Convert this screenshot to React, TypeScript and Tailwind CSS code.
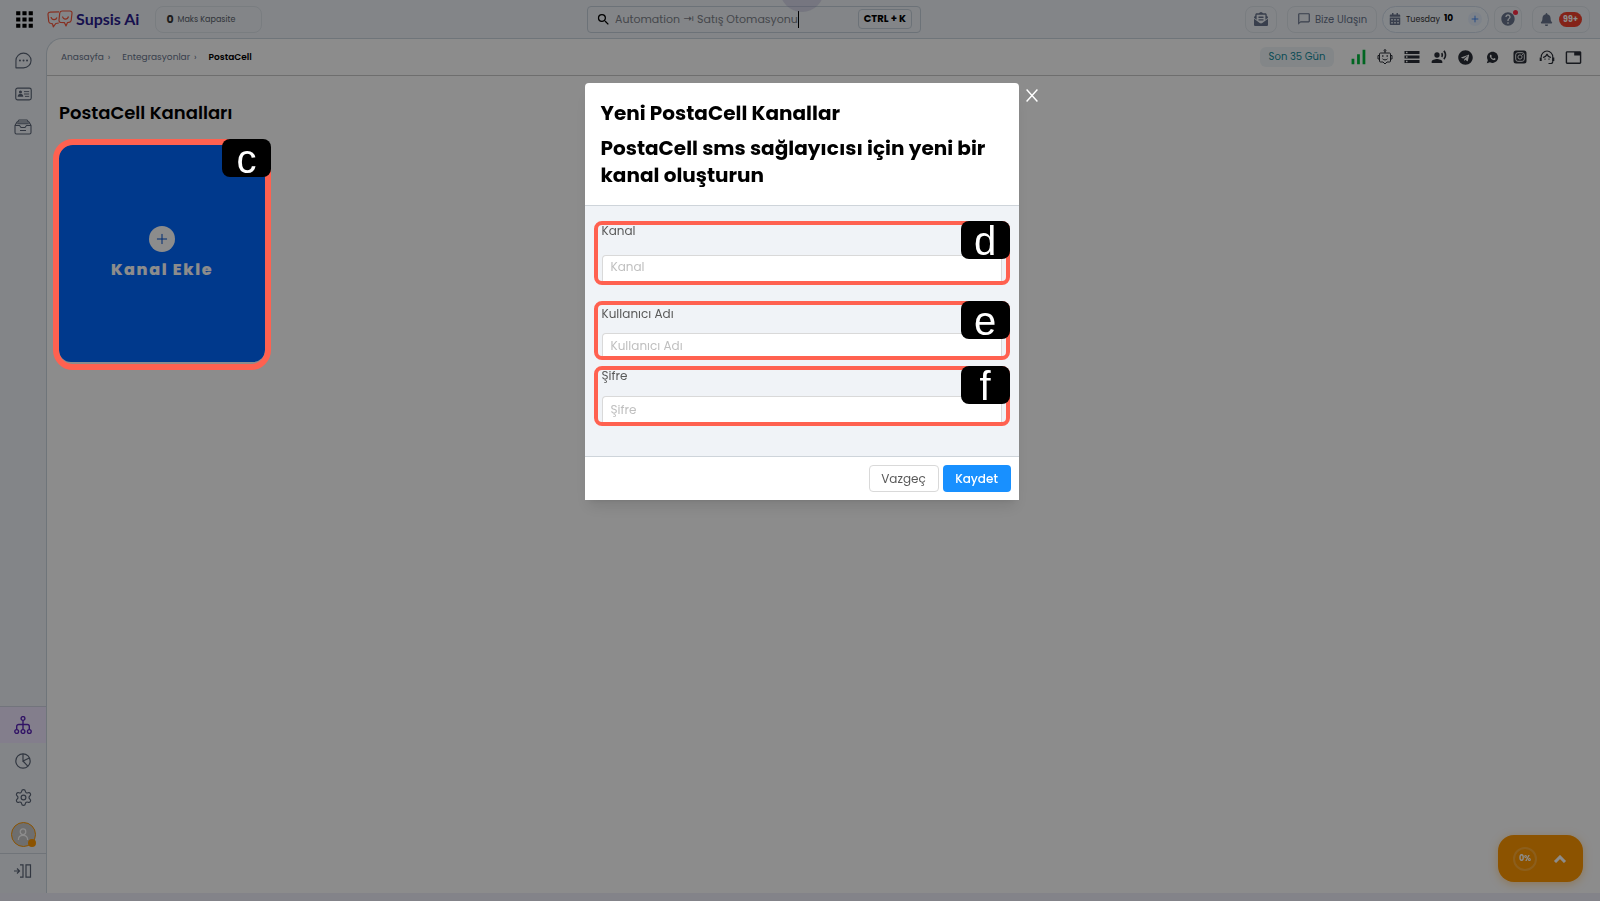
import { useState } from "react";
import {
  MdApps,
  MdSearch,
  MdStorage,
  MdRecordVoiceOver,
  MdTab,
  MdSignalCellularAlt,
  MdOutlineChatBubbleOutline,
  MdHelp,
} from "react-icons/md";
import { FaEnvelopeOpenText, FaCalendarAlt, FaBell, FaTelegram } from "react-icons/fa";
import { IoLogoWhatsapp } from "react-icons/io";
import { Settings, Plus } from "lucide-react";

type IconProps = { className?: string };

function ChatIcon({ className }: IconProps) {
  return (
    <svg className={className} viewBox="0 0 18 18" fill="none" stroke="currentColor" strokeWidth="1.2" strokeLinejoin="round">
      <path d="M1 16.800V9a8 7.800 0 1 1 8 7.800z" />
      <path d="M5.200 9h.1M9 9h.1M12.700 9h.1" strokeWidth="2" strokeLinecap="round" />
    </svg>
  );
}

function CardIcon({ className }: IconProps) {
  return (
    <svg className={className} viewBox="0 0 18 14" fill="none" stroke="currentColor" strokeWidth="1.200">
      <rect x=".8" y=".8" width="16.400" height="12.400" rx="2" />
      <path d="M9.500 4.500H15M9.500 7H15M10.500 9.500H15" strokeWidth="1" />
      <circle cx="5.800" cy="5" r="1.600" fill="currentColor" stroke="none" />
      <path d="M2.800 10c0-2.500 1.500-3 3-3s3 .5 3 3z" fill="currentColor" stroke="none" />
    </svg>
  );
}

function InboxIcon({ className }: IconProps) {
  return (
    <svg className={className} viewBox="0 0 18 16" fill="none" stroke="currentColor" strokeWidth="1.1" strokeLinejoin="round">
      <path d="M1 6.5 3 3h12l2 3.500v7A1.500 1.500 0 0 1 15.500 15h-13A1.500 1.500 0 0 1 1 13.500z" />
      <path d="M1 6.500h4.500L7 8.500h4l1.500-2H17M3.500 3 5 1h8l1.500 2M6 11.500h6M3.200 4.800h11.600" />
    </svg>
  );
}

function TreeIcon({ className }: IconProps) {
  return (
    <svg className={className} viewBox="0 0 18 18" fill="none" stroke="currentColor" strokeWidth="1.4">
      <circle cx="9" cy="2.500" r="1.900" />
      <circle cx="2.700" cy="15.500" r="1.900" />
      <circle cx="9" cy="15.500" r="1.900" />
      <circle cx="15.300" cy="15.500" r="1.900" />
      <path d="M9 4.400v9.200M2.700 13.600V10.500a2 2 0 0 1 2-2h8.600a2 2 0 0 1 2 2v3.100" />
    </svg>
  );
}

function PieIcon({ className }: IconProps) {
  return (
    <svg className={className} viewBox="0 0 16 16" fill="none" stroke="currentColor" strokeWidth="1.200">
      <circle cx="8" cy="8" r="7.200" />
      <path d="M8 .8V8l6.300-3M8 8l4.800 5.200" />
    </svg>
  );
}

function ExpandIcon({ className }: IconProps) {
  return (
    <svg className={className} viewBox="0 0 18 14" fill="none" stroke="currentColor" strokeWidth="1.200">
      <path d="M0 7h5M3 4.500 5.500 7 3 9.500M6 .8h3v12.400H6M12 .8h4.500v12.400H12z" />
    </svg>
  );
}

function BotIcon({ className }: IconProps) {
  return (
    <svg className={className} viewBox="0 0 16 16" fill="none" stroke="currentColor" strokeWidth="1">
      <circle cx="8" cy="1.500" r=".9" />
      <path d="M8 2.400V4M3.500 4h9a1 1 0 0 1 1 1v7a1 1 0 0 1-1 1H10l-2 2-2-2H3.500a1 1 0 0 1-1-1V5a1 1 0 0 1 1-1zM2.500 6.500h-1.500v3.500h1.500M13.500 6.500h1.500v3.500h-1.500M5.500 9.800c1.500 1.500 3.500 1.500 5 0" />
      <path d="M5.800 6.200v1.600M10.200 6.200v1.600" strokeWidth="1.300" />
    </svg>
  );
}

function InstagramIcon({ className }: IconProps) {
  return (
    <svg className={className} viewBox="0 0 14 14" fill="none" stroke="white" strokeWidth=".9">
      <rect x=".5" y=".5" width="13" height="13" rx="2.500" fill="currentColor" stroke="none" />
      <rect x="2.700" y="2.700" width="8.600" height="8.600" rx="2.200" />
      <circle cx="7" cy="7" r="2.100" />
      <circle cx="9.500" cy="4.500" r=".5" fill="white" stroke="none" />
    </svg>
  );
}

function AgentIcon({ className }: IconProps) {
  return (
    <svg className={className} viewBox="0 0 16 16" fill="none" stroke="currentColor" strokeWidth="1.100">
      <path d="M2.200 8.500V8a5.800 6 0 0 1 11.600 0v4.500a2 2 0 0 1-2 2H9.500" />
      <path d="M4 8.500c2-.5 3.500-1.500 4-3.500.5 2 2 3 4 3.500" />
      <path d="M1.700 8.500V12M14.300 8.500V12" strokeWidth="2" />
      <path d="M6 9.500v1.200M10 9.500v1.200" />
    </svg>
  );
}

function SupsisLogo({ className }: IconProps) {
  return (
    <svg className={className} viewBox="0 0 26 18" fill="none" stroke="currentColor" strokeWidth="1.200" strokeLinejoin="round">
      <path d="M12 1.800 3 2.200a2 2 0 0 0-2 2.200l.7 7A2.500 2.500 0 0 0 4 13.500l1.500.3.800 3 2.500-3.300 3-.5" />
      <path d="M15 1h8a2 2 0 0 1 2 2.300l-.8 7a2.500 2.500 0 0 1-2.200 2l-1.500.2-1.500 3.500-1.500-3.300-3.500-.2a2 2 0 0 1-2-2.200l.7-7A2.500 2.500 0 0 1 15 1z" />
      <path d="M4 7c.7 3.500 5 3.500 6 .500M15.500 6.500c.7 3.500 5 3.500 6 0" />
    </svg>
  );
}

// marker box with its letter in the upper right corner
function Marker({ letter, className }: { letter: string; className: string }) {
  return (
    <div className={`pointer-events-none absolute z-50 border-[#ff6150] ${className}`}>
      <span className="absolute flex h-[38px] w-[49px] items-center justify-center rounded-lg bg-black pt-px font-['Liberation_Sans',sans-serif] text-[40px] leading-none text-white">
        {letter}
      </span>
    </div>
  );
}

type FieldProps = {
  id: string;
  label: string;
  letter: string;
  type?: string;
  className: string;
  inputClassName: string;
};

function Field({ id, label, letter, type = "text", className, inputClassName }: FieldProps) {
  return (
    <div className={`relative flex flex-col justify-between px-2 pb-1 ${className}`}>
      <label htmlFor={id} className="text-xs leading-5 text-[#595959]">
        {label}
      </label>
      <input
        id={id}
        type={type}
        placeholder={label}
        className={`w-full rounded-t-sm border border-b-0 border-[#d9d9d9] bg-white px-2 text-xs text-[#595959] outline-none placeholder:text-[#bfbfbf] ${inputClassName}`}
      />
      <Marker letter={letter} className="inset-0 rounded-lg border-4 [&>span]:-right-1 [&>span]:-top-1" />
    </div>
  );
}

export default function App() {
  const [open, setOpen] = useState(true);
  const [search, setSearch] = useState("Automation ⇥ Satış Otomasyonu");

  const statusIcons = [
    { label: "Signal", icon: <MdSignalCellularAlt size={22} className="text-[#00b93c]" /> },
    { label: "Bot", icon: <BotIcon className="size-4" /> },
    { label: "Servers", icon: <MdStorage size={18} /> },
    { label: "Voice", icon: <MdRecordVoiceOver size={16} /> },
    { label: "Telegram", icon: <FaTelegram size={15} /> },
    { label: "WhatsApp", icon: <IoLogoWhatsapp size={13} /> },
    { label: "Instagram", icon: <InstagramIcon className="size-[14px]" /> },
    { label: "Agent", icon: <AgentIcon className="size-4" /> },
    { label: "Window", icon: <MdTab size={17} /> },
  ];

  return (
    <div className="flex min-h-screen flex-col bg-[#eff3f8] font-['Poppins','Inter',sans-serif] text-black">
      {/* Top bar */}
      <header className="grid h-[38px] grid-cols-[575fr_334px_669fr] items-center pl-3 pr-[10px]">
        <div className="flex items-center">
          <button aria-label="Menu">
            <MdApps size={25} />
          </button>
          <a href="#" className="ml-[10px] flex items-center gap-[3px] font-['Lato',sans-serif] text-base font-bold leading-5 text-[#2b1d8e]">
            <SupsisLogo className="h-[18px] w-[26px] text-[#f4573c]" />
            Supsis Ai
          </a>
          <div className="ml-4 flex h-[27px] w-[107px] items-center gap-1 rounded-lg border border-[#dde3ea] px-[10px] text-[8px] text-[#595f6b]">
            <b className="text-[11px] text-[#333]">0</b>
            <span className="pt-px">Maks Kapasite</span>
          </div>
        </div>

        <div className="flex h-[27px] items-center rounded border border-[#c5d0db] px-2">
          <MdSearch size={15} />
          <input
            aria-label="Search"
            value={search}
            onChange={(e) => setSearch(e.target.value)}
            className="ml-1 field-sizing-content text-[11px] text-[#7d828a] outline-none"
          />
          <span className="h-[17px] w-px bg-black" />
          <kbd className="ml-auto rounded-sm border border-[#c5d0db] px-[5px] font-['Poppins','Inter',sans-serif] text-[10px] font-bold leading-[18px]">
            CTRL + K
          </kbd>
        </div>

        <div className="flex items-center justify-end gap-[10px] text-[#68748c]">
          <button aria-label="Inbox" className="flex h-[27px] w-8 items-center justify-center rounded-lg border border-[#dde3ea]">
            <FaEnvelopeOpenText size={14} />
          </button>
          <div className="flex gap-[5px]">
            <button className="flex h-[27px] w-[90px] items-center justify-center gap-1 rounded-lg border border-[#dde3ea] text-[10px]">
              <MdOutlineChatBubbleOutline size={14} />
              Bize Ulaşın
            </button>
            <button className="flex h-[27px] w-[107px] items-center rounded-full border border-[#cfdae8] bg-[#f1f6fc] px-[6px] text-[8px] text-[#333]">
              <FaCalendarAlt size={12} className="mr-[5px] text-[#68748c]" />
              <span className="pt-px">Tuesday</span>
              <b className="ml-1 text-[9px] text-black">10</b>
              <span className="ml-auto flex size-[14px] items-center justify-center rounded-full bg-[#e3edfb]">
                <Plus size={10} className="text-[#2f7cf0]" />
              </span>
            </button>
            <button aria-label="Help" className="relative flex h-[27px] w-7 items-center justify-center rounded-lg border border-[#dde3ea]">
              <MdHelp size={16} />
              <span className="absolute right-[3px] top-[3px] size-[5px] rounded-full bg-[#ff2d46]" />
            </button>
          </div>
          <button className="flex h-[27px] w-[58px] items-center justify-center gap-[6px] rounded-lg border border-[#dde3ea]">
            <FaBell size={13} />
            <span className="rounded-full bg-[#f0402c] px-1 text-[8px] font-bold leading-[15px] text-white">99+</span>
          </button>
        </div>
      </header>

      <div className="flex flex-1">
        {/* Sidebar */}
        <aside className="flex w-[46px] flex-col items-center text-[#5b6577]">
          <nav className="flex flex-col items-center gap-[17px] pt-[14px]">
            <a href="#" aria-label="Chats"><ChatIcon className="size-[17px]" /></a>
            <a href="#" aria-label="Contacts" className="py-px"><CardIcon className="h-[14px] w-[17px]" /></a>
            <a href="#" aria-label="Archive"><InboxIcon className="h-4 w-[18px]" /></a>
          </nav>
          <nav className="mt-auto flex w-full flex-col items-center">
            <a href="#" aria-label="Integrations" className="flex h-[37px] w-full items-center justify-center border-t border-[#d0d4e2] bg-[#efe5ff] text-[#5a24b8]">
              <TreeIcon className="size-[18px]" />
            </a>
            <a href="#" aria-label="Reports" className="flex h-9 items-center"><PieIcon className="size-4" /></a>
            <a href="#" aria-label="Settings" className="flex h-[37px] items-center"><Settings size={19} strokeWidth={1.5} /></a>
            <a href="#" aria-label="Profile" className="flex h-[37px] items-center">
              <span className="relative flex size-[25px] items-center justify-center rounded-full border border-[#ff9800] bg-[#c9c9c9] text-white">
                <svg viewBox="0 0 12 14" className="h-[13px] w-3" fill="none" stroke="currentColor" strokeWidth="1.300">
                  <circle cx="6" cy="4" r="3" />
                  <path d="M1 13c0-3 2-5 5-5s5 2 5 5" />
                </svg>
                <span className="absolute -bottom-px -right-px size-2 rounded-full bg-[#ff9800]" />
              </span>
            </a>
            <a href="#" aria-label="Expand" className="flex h-10 w-full items-center justify-center border-t border-[#cdd3dc] pb-[6px]">
              <ExpandIcon className="h-[14px] w-[18px]" />
            </a>
          </nav>
        </aside>

        {/* Page */}
        <main className="min-w-0 flex-1 rounded-tl-2xl border-l border-t border-[#cbd5df] bg-white">
          <div className="flex h-[37px] items-center justify-between border-b border-[#c9c9c9] pl-[14px] pr-[13px]">
            <nav className="flex items-center gap-3 pt-[2px] text-[9px] text-[#68748c]">
              <a href="#" className="flex gap-1">Anasayfa <span>›</span></a>
              <a href="#" className="flex gap-1">Entegrasyonlar <span>›</span></a>
              <b className="font-semibold text-black">PostaCell</b>
            </nav>
            <div className="flex items-center text-[#2a2e37]">
              <span className="mr-[10px] w-[74px] rounded-md bg-[#eff5f8] text-center text-[10px] leading-5 text-[#128a9c]">Son 35 Gün</span>
              {statusIcons.map(({ label, icon }) => (
                <button key={label} aria-label={label} className="flex w-[27px] justify-center">
                  {icon}
                </button>
              ))}
            </div>
          </div>

          <div className="p-3">
            <h1 className="mt-[13px] text-lg font-semibold leading-6">PostaCell Kanalları</h1>
            <div className="relative mt-5 w-[206px]">
              <button
                onClick={() => setOpen(true)}
                className="flex h-[217px] w-full flex-col items-center justify-center gap-[6px] rounded-xl bg-[#0069ff] text-base font-extrabold leading-6 tracking-widest text-white"
              >
                <span className="flex size-[26px] items-center justify-center rounded-full bg-white text-[#0050d0]">
                  <Plus size={16} strokeWidth={1.5} />
                </span>
                Kanal Ekle
              </button>
              <Marker letter="c" className="-inset-x-[6px] -bottom-2 -top-[6px] rounded-[20px] border-[6px] [&>span]:-right-[6px] [&>span]:-top-[6px]" />
            </div>
          </div>
        </main>
      </div>
      <div className="h-2 bg-[#eeeff9]" />

      <button className="fixed bottom-[19px] right-[17px] flex h-[47px] w-[85px] items-center justify-between rounded-2xl bg-[#ff9800] px-[15px] text-white shadow-[0_2px_10px_#ff980060]">
        <span className="flex size-6 items-center justify-center rounded-full border-2 border-white/20 text-[8px] font-bold">0%</span>
        <svg viewBox="0 0 12 8" className="h-2 w-4" fill="none" stroke="currentColor" strokeWidth="3">
          <path d="m1 7 5-5 5 5" />
        </svg>
      </button>

      {/* Modal */}
      {open && (
        <div className="fixed inset-0 z-40 flex items-start justify-center bg-black/45 pl-[3px]">
          <div className="absolute -top-8 size-11 rounded-full bg-[#4f4d68]/25" />
          <section
            role="dialog"
            aria-modal="true"
            aria-labelledby="modal-title"
            className="relative mt-[83px] w-[434px] rounded-t bg-white shadow-lg"
          >
            <button
              aria-label="Close"
              onClick={() => setOpen(false)}
              className="absolute -right-[19px] top-[6px] text-white"
            >
              <svg viewBox="0 0 12 13" className="h-[13px] w-3" fill="none" stroke="currentColor" strokeWidth="1.400">
                <path d="m.6.5 10.800 12M11.400.5.6 12.500" />
              </svg>
            </button>
            <div className="border-b border-[#ced4da] px-4 pb-4 pt-[17px] text-xl font-bold leading-[27px]">
              <h2 id="modal-title">Yeni PostaCell Kanallar</h2>
              <p className="mt-2">PostaCell sms sağlayıcısı için yeni bir kanal oluşturun</p>
            </div>
            <form className="bg-[#f0f3f7] px-[9px] pb-[30px] pt-[15px]">
              <Field id="kanal" label="Kanal" letter="d" className="h-16" inputClassName="h-[26px] pb-[3px]" />
              <Field id="kullanici" label="Kullanıcı Adı" letter="e" className="mt-4 h-[59px] pt-[3px]" inputClassName="h-[23px] pt-[2px]" />
              <Field id="sifre" label="Şifre" letter="f" type="password" className="mt-[6px] h-[60px]" inputClassName="h-[26px]" />
            </form>
            <div className="flex justify-end gap-1 border-t border-[#ced4da] p-2 text-xs">
              <button onClick={() => setOpen(false)} className="h-[27px] w-[70px] rounded-sm border border-[#d9d9d9] text-[#595959]">
                Vazgeç
              </button>
              <button className="h-[27px] w-[68px] rounded-sm bg-[#1890ff] font-medium text-white">Kaydet</button>
            </div>
          </section>
        </div>
      )}
    </div>
  );
}
